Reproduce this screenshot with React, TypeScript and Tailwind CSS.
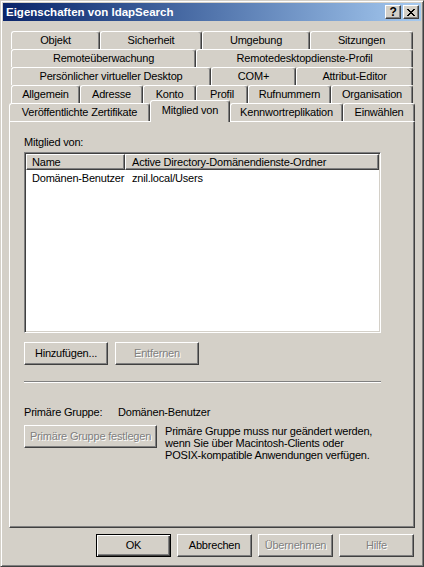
const raised =
  "border border-t-white border-l-white border-r-[#404040] border-b-[#404040] shadow-[inset_-1px_-1px_#808080]";
const disabledText = "text-[#808080] [text-shadow:1px_1px_0_#fff]";

function Tab({ label, className = "" }: { label: string; className?: string }) {
  return (
    <div
      className={`h-[18px] shrink-0 flex items-center justify-center rounded-t-[3px] border-t border-l border-r border-t-white border-l-white border-r-[#404040] shadow-[inset_-1px_0_#808080] ${className}`}
    >
      {label}
    </div>
  );
}

function Btn({
  label,
  className = "",
  disabled = false,
  isDefault = false,
}: {
  label: string;
  className?: string;
  disabled?: boolean;
  isDefault?: boolean;
}) {
  const frame = isDefault
    ? "border border-black shadow-[inset_1px_1px_#fff,inset_-1px_-1px_#404040,inset_-2px_-2px_#808080]"
    : raised;
  return (
    <div
      className={`h-[23px] shrink-0 flex items-center justify-center ${frame} ${
        disabled ? disabledText : "text-black"
      } ${className}`}
    >
      {label}
    </div>
  );
}

function CloseGlyph() {
  // classic 8x7 pixel cross
  return (
    <svg width="8" height="7" viewBox="0 0 8 7" shapeRendering="crispEdges">
      <g fill="#000">
        <rect x="0" y="0" width="2" height="1" />
        <rect x="6" y="0" width="2" height="1" />
        <rect x="1" y="1" width="2" height="1" />
        <rect x="5" y="1" width="2" height="1" />
        <rect x="2" y="2" width="4" height="1" />
        <rect x="3" y="3" width="2" height="1" />
        <rect x="2" y="4" width="4" height="1" />
        <rect x="1" y="5" width="2" height="1" />
        <rect x="5" y="5" width="2" height="1" />
        <rect x="0" y="6" width="2" height="1" />
        <rect x="6" y="6" width="2" height="1" />
      </g>
    </svg>
  );
}

export default function App() {
  return (
    <div className="w-[424px] h-[567px] bg-[#d4d0c8] border border-t-[#d4d0c8] border-l-[#d4d0c8] border-r-[#404040] border-b-[#404040] shadow-[inset_1px_1px_#fff,inset_-1px_-1px_#808080] p-[2px] font-['Liberation_Sans',Arial,sans-serif] text-[11px] leading-[13px] tracking-[-0.2px] text-black">
      {/* title bar */}
      <div className="h-[18px] flex items-center bg-gradient-to-r from-[#0a246a] to-[#a6caf0] pl-[3px] pr-[2px]">
        <div className="flex-1 text-white font-bold text-[11.5px] tracking-normal">
          Eigenschaften von ldapSearch
        </div>
        <div className={`w-[16px] h-[14px] bg-[#d4d0c8] flex items-center justify-center font-bold text-[12px] leading-none ${raised}`}>
          ?
        </div>
        <div className={`ml-[2px] w-[16px] h-[14px] bg-[#d4d0c8] flex items-center justify-center ${raised}`}>
          <CloseGlyph />
        </div>
      </div>

      <div className="px-[6px] mt-[10px]">
        {/* tab rows */}
        <div className="flex ml-[2px]">
          <Tab label="Objekt" className="w-[89px]" />
          <Tab label="Sicherheit" className="w-[102px]" />
          <Tab label="Umgebung" className="w-[108px]" />
          <Tab label="Sitzungen" className="w-[103px]" />
        </div>
        <div className="flex ml-[2px]">
          <Tab label="Remoteüberwachung" className="w-[185px]" />
          <Tab label="Remotedesktopdienste-Profil" className="w-[217px]" />
        </div>
        <div className="flex ml-[2px]">
          <Tab label="Persönlicher virtueller Desktop" className="w-[200px]" />
          <Tab label="COM+" className="w-[85px]" />
          <Tab label="Attribut-Editor" className="w-[117px]" />
        </div>
        <div className="flex ml-[2px]">
          <Tab label="Allgemein" className="w-[69px]" />
          <Tab label="Adresse" className="w-[63px]" />
          <Tab label="Konto" className="w-[53px]" />
          <Tab label="Profil" className="w-[52px]" />
          <Tab label="Rufnummern" className="w-[83px]" />
          <Tab label="Organisation" className="w-[82px]" />
        </div>
        <div className="flex h-[18px] items-start">
          <Tab label="Veröffentlichte Zertifikate" className="w-[141px]" />
          <div className="relative z-10 -mt-[3px] h-[22px] w-[80px] shrink-0 flex justify-center pt-[3px] bg-[#d4d0c8] rounded-t-[3px] border-t border-l border-r border-t-white border-l-white border-r-[#404040] shadow-[inset_-1px_0_#808080]">
            Mitglied von
          </div>
          <Tab label="Kennwortreplikation" className="w-[113px]" />
          <Tab label="Einwählen" className="w-[72px]" />
        </div>

        {/* panel */}
        <div className={`h-[407px] px-[14px] pt-[14px] ${raised}`}>
          <div>Mitglied von:</div>
          <div className="mt-[3px] w-[357px] h-[181px] bg-white border border-t-[#808080] border-l-[#808080] border-r-white border-b-white shadow-[inset_1px_1px_#404040,inset_-1px_-1px_#d4d0c8] p-[1px]">
            <div className="flex h-[16px] bg-[#d4d0c8]">
              <div className={`w-[99px] h-full pl-[5px] flex items-center ${raised}`}>Name</div>
              <div className={`flex-1 h-full pl-[6px] flex items-center ${raised}`}>
                Active Directory-Domänendienste-Ordner
              </div>
            </div>
            <div className="flex h-[14px] mt-px items-center">
              <div className="w-[99px] pl-[6px]">Domänen-Benutzer</div>
              <div className="pl-[7px]">znil.local/Users</div>
            </div>
          </div>

          <div className="flex gap-[7px] mt-[9px]">
            <Btn label="Hinzufügen..." className="w-[84px]" />
            <Btn label="Entfernen" className="w-[84px]" disabled />
          </div>

          <div className="mt-[16px] w-[357px] h-[2px] border-t border-t-[#808080] border-b border-b-white" />

          <div className="mt-[23px] flex">
            <div className="w-[94px]">Primäre Gruppe:</div>
            <div>Domänen-Benutzer</div>
          </div>

          <div className="mt-[6px] flex gap-[8px]">
            <Btn label="Primäre Gruppe festlegen" className="w-[133px]" disabled />
            <div className="leading-[12px]">
              Primäre Gruppe muss nur geändert werden,
              <br />
              wenn Sie über Macintosh-Clients oder
              <br />
              POSIX-kompatible Anwendungen verfügen.
            </div>
          </div>
        </div>

        {/* dialog buttons */}
        <div className="mt-[6px] flex justify-end gap-[6px] pr-px">
          <Btn label="OK" className="w-[75px]" isDefault />
          <Btn label="Abbrechen" className="w-[75px]" />
          <Btn label="Übernehmen" className="w-[75px]" disabled />
          <Btn label="Hilfe" className="w-[75px]" disabled />
        </div>
      </div>
    </div>
  );
}
